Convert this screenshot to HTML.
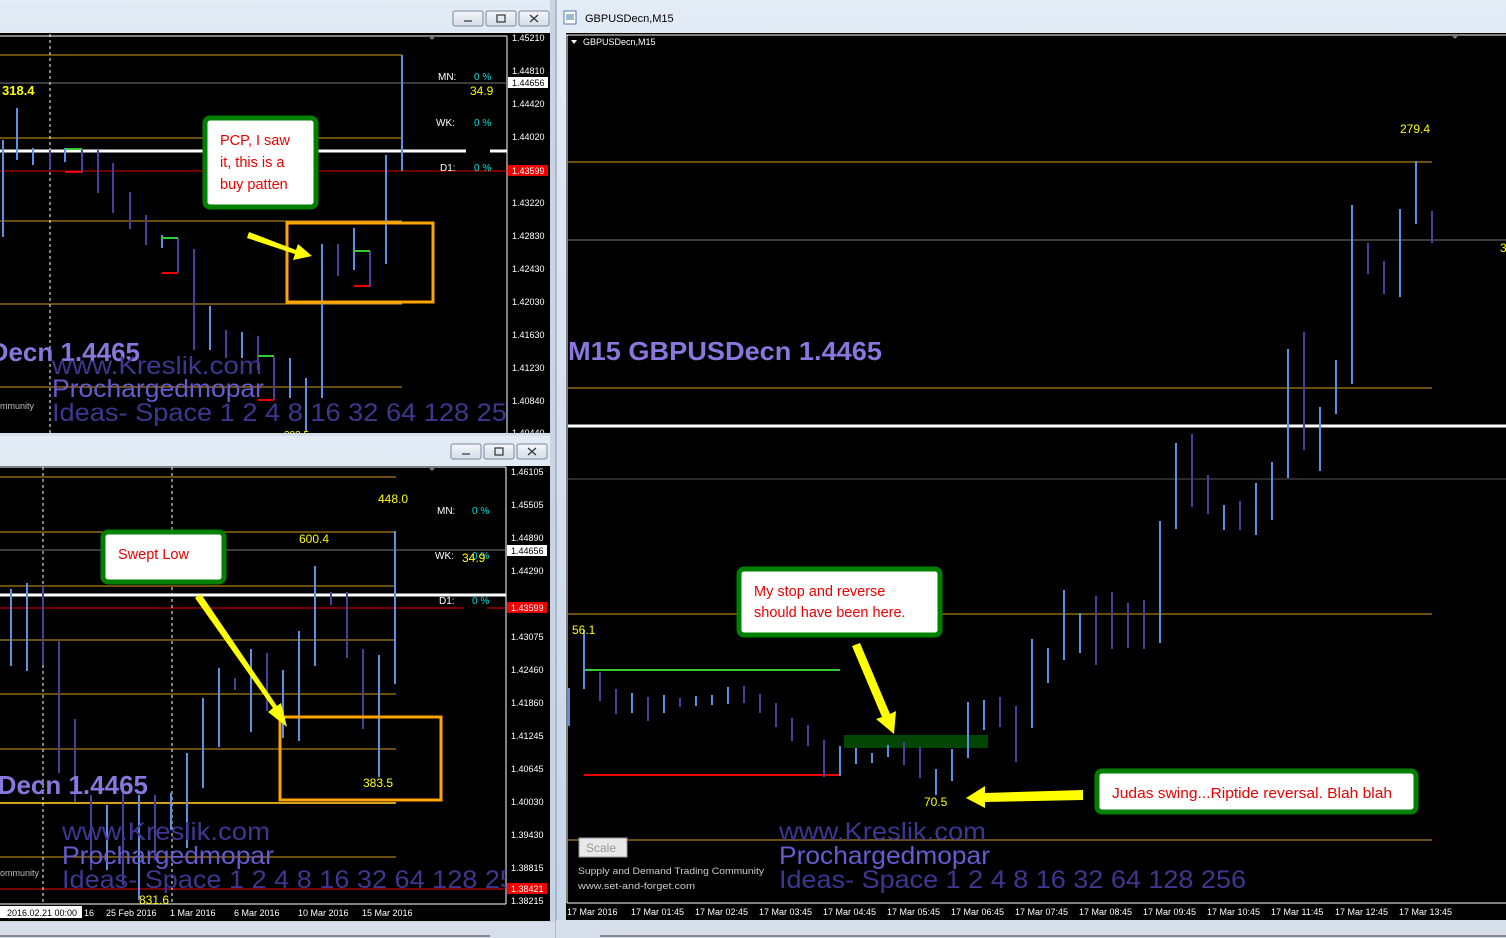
<!DOCTYPE html>
<html><head><meta charset="utf-8"><style>
html,body{margin:0;padding:0;background:#d4dbe6;width:1506px;height:938px;overflow:hidden}
svg{display:block}
text{font-family:"Liberation Sans",sans-serif}
</style></head><body>
<svg width="1506" height="938" viewBox="0 0 1506 938" xmlns="http://www.w3.org/2000/svg">
<defs>
<linearGradient id="tb" x1="0" y1="0" x2="0" y2="1"><stop offset="0" stop-color="#e3ebf5"/><stop offset="1" stop-color="#c6d5e8"/></linearGradient>
<linearGradient id="bt" x1="0" y1="0" x2="0" y2="1"><stop offset="0" stop-color="#f4f6fa"/><stop offset="1" stop-color="#d5dde8"/></linearGradient>
<clipPath id="c1"><rect x="0" y="34" width="507" height="400"/></clipPath>
<clipPath id="c2"><rect x="0" y="467" width="506" height="437"/></clipPath>
</defs>
<rect width="1506" height="938" fill="#d6dee9"/>
<!-- ============ LEFT TOP WINDOW ============ -->
<rect x="0" y="0" width="556" height="434" fill="url(#tb)"/>
<rect x="0" y="33" width="550" height="400" fill="#000"/>
<g fill="url(#bt)" stroke="#7b8797">
<rect x="453" y="11" width="30" height="15" rx="2"/><rect x="486" y="11" width="30" height="15" rx="2"/><rect x="519" y="11" width="30" height="15" rx="2"/></g>
<g stroke="#333" fill="none" stroke-width="1.2"><line x1="464" y1="21" x2="472" y2="21"/><rect x="497" y="15" width="8" height="7"/><path d="M530 15l8 7M538 15l-8 7"/></g>
<line x1="0" y1="36" x2="507" y2="36" stroke="#fff"/>
<line x1="507" y1="36" x2="507" y2="433" stroke="#fff"/>
<path d="M428 36l4 4 4-4z" fill="#777"/>
<g stroke="#d4a017" stroke-width="1"><line x1="0" y1="55" x2="402" y2="55"/><line x1="0" y1="138" x2="402" y2="138"/><line x1="0" y1="221" x2="402" y2="221"/><line x1="0" y1="304" x2="402" y2="304"/><line x1="0" y1="387" x2="402" y2="387"/></g>
<line x1="0" y1="83" x2="507" y2="83" stroke="#777"/>
<line x1="0" y1="151" x2="466" y2="151" stroke="#fff" stroke-width="3"/>
<line x1="490" y1="151" x2="507" y2="151" stroke="#fff" stroke-width="3"/>
<line x1="0" y1="171" x2="507" y2="171" stroke="#e00000"/>
<line x1="50" y1="34" x2="50" y2="433" stroke="#fff" stroke-dasharray="3,3"/>
<g stroke-width="2">
<line x1="3" y1="140" x2="3" y2="237" stroke="#5b8fe8"/><line x1="17" y1="108" x2="17" y2="160" stroke="#5b8fe8"/><line x1="33" y1="148" x2="33" y2="165" stroke="#5b8fe8"/><line x1="50" y1="150" x2="50" y2="170" stroke="#4a3fa0"/><line x1="65" y1="148" x2="65" y2="162" stroke="#5b8fe8"/><line x1="82" y1="150" x2="82" y2="173" stroke="#4a3fa0"/><line x1="98" y1="150" x2="98" y2="193" stroke="#4a3fa0"/><line x1="113" y1="163" x2="113" y2="213" stroke="#4a3fa0"/><line x1="130" y1="192" x2="130" y2="229" stroke="#4a3fa0"/><line x1="146" y1="215" x2="146" y2="245" stroke="#4a3fa0"/><line x1="162" y1="235" x2="162" y2="248" stroke="#5b8fe8"/><line x1="178" y1="238" x2="178" y2="273" stroke="#4a3fa0"/><line x1="194" y1="249" x2="194" y2="350" stroke="#4a3fa0"/><line x1="210" y1="306" x2="210" y2="350" stroke="#5b8fe8"/><line x1="226" y1="330" x2="226" y2="358" stroke="#4a3fa0"/><line x1="242" y1="332" x2="242" y2="358" stroke="#5b8fe8"/><line x1="258" y1="336" x2="258" y2="370" stroke="#4a3fa0"/><line x1="274" y1="357" x2="274" y2="400" stroke="#4a3fa0"/><line x1="290" y1="358" x2="290" y2="398" stroke="#5b8fe8"/><line x1="306" y1="378" x2="306" y2="432" stroke="#5b8fe8"/><line x1="322" y1="244" x2="322" y2="398" stroke="#5b8fe8"/><line x1="338" y1="244" x2="338" y2="276" stroke="#4a3fa0"/><line x1="354" y1="228" x2="354" y2="270" stroke="#5b8fe8"/><line x1="370" y1="251" x2="370" y2="287" stroke="#4a3fa0"/><line x1="386" y1="155" x2="386" y2="264" stroke="#5b8fe8"/><line x1="402" y1="55" x2="402" y2="171" stroke="#5b8fe8"/>
</g>
<g stroke-width="2"><line x1="65" y1="149" x2="82" y2="149" stroke="#3c3"/><line x1="65" y1="172" x2="82" y2="172" stroke="#e00"/><line x1="162" y1="238" x2="178" y2="238" stroke="#3c3"/><line x1="162" y1="273" x2="178" y2="273" stroke="#e00"/><line x1="354" y1="251" x2="370" y2="251" stroke="#3c3"/><line x1="354" y1="286" x2="370" y2="286" stroke="#e00"/><line x1="258" y1="356" x2="274" y2="356" stroke="#3c3"/><line x1="258" y1="400" x2="274" y2="400" stroke="#e00"/></g>
<g font-size="9" fill="#fff"><text x="512" y="41">1.45210</text><text x="512" y="74">1.44810</text><text x="512" y="107">1.44420</text><text x="512" y="140">1.44020</text><text x="512" y="206">1.43220</text><text x="512" y="239">1.42830</text><text x="512" y="272">1.42430</text><text x="512" y="305">1.42030</text><text x="512" y="338">1.41630</text><text x="512" y="371">1.41230</text><text x="512" y="404">1.40840</text><text x="512" y="436">1.40440</text></g>
<rect x="508" y="77" width="40" height="11" fill="#fff"/><text x="512" y="86" font-size="9" fill="#000">1.44656</text>
<rect x="508" y="165" width="40" height="11" fill="#e00"/><text x="512" y="174" font-size="9" fill="#fff">1.43599</text>
<g font-size="10"><text x="438" y="80" fill="#fff">MN:</text><text x="474" y="80" fill="#0dd">0 %</text><text x="436" y="126" fill="#fff">WK:</text><text x="474" y="126" fill="#0dd">0 %</text><text x="440" y="171" fill="#fff">D1:</text><text x="474" y="171" fill="#0dd">0 %</text></g>
<text x="470" y="95" font-size="12" fill="#ff0">34.9</text>
<text x="2" y="95" font-size="13" font-weight="bold" fill="#ff0">318.4</text>
<text x="0" y="409" font-size="9" fill="#bbb">mmunity</text>
<text x="140" y="361" text-anchor="end" font-size="26" font-weight="bold" fill="#8a76dc">GBPUSDecn 1.4465</text>
<g clip-path="url(#c1)">
<text x="52" y="374" font-size="25" fill="#3f3690" textLength="210" lengthAdjust="spacingAndGlyphs">www.Kreslik.com</text>
<text x="52" y="397" font-size="25" fill="#6a5ad0" textLength="212" lengthAdjust="spacingAndGlyphs">Prochargedmopar</text>
<text x="52" y="421" font-size="25" fill="#3f3690" textLength="470" lengthAdjust="spacingAndGlyphs">Ideas- Space 1 2 4 8 16 32 64 128 256</text>
</g>
<text x="284" y="438" font-size="10" fill="#ff0">383.5</text>
<rect x="0" y="433" width="556" height="3" fill="#d6dee9"/>
<rect x="287" y="223" width="146" height="79" fill="none" stroke="#ffa500" stroke-width="3"/>
<rect x="205" y="118" width="111" height="89" rx="5" fill="#fff" stroke="#008000" stroke-width="5"/>
<g font-size="14.5" fill="#e00"><text x="220" y="145">PCP, I saw</text><text x="220" y="167">it, this is a</text><text x="220" y="189">buy patten</text></g>
<path d="M249 232 L296 250 L298 244 L312 256 L293 260 L295 254 L247 238z" fill="#ff0"/>
<!-- ============ LEFT BOTTOM WINDOW ============ -->
<rect x="0" y="436" width="556" height="490" fill="url(#tb)"/>
<rect x="0" y="466" width="550" height="455" fill="#000"/>
<g fill="url(#bt)" stroke="#7b8797"><rect x="451" y="444" width="30" height="15" rx="2"/><rect x="484" y="444" width="30" height="15" rx="2"/><rect x="517" y="444" width="30" height="15" rx="2"/></g>
<g stroke="#333" fill="none" stroke-width="1.2"><line x1="462" y1="454" x2="470" y2="454"/><rect x="495" y="448" width="8" height="7"/><path d="M528 448l8 7M536 448l-8 7"/></g>
<line x1="0" y1="467" x2="506" y2="467" stroke="#fff"/>
<line x1="506" y1="467" x2="506" y2="904" stroke="#fff"/>
<line x1="0" y1="904" x2="506" y2="904" stroke="#fff"/>
<path d="M428 467l4 4 4-4z" fill="#777"/>
<g stroke="#d4a017"><line x1="0" y1="477" x2="396" y2="477"/><line x1="0" y1="532" x2="396" y2="532"/><line x1="0" y1="586" x2="396" y2="586"/><line x1="0" y1="640" x2="396" y2="640"/><line x1="0" y1="694" x2="396" y2="694"/><line x1="0" y1="749" x2="396" y2="749"/><line x1="0" y1="803" x2="396" y2="803" stroke-width="2"/><line x1="0" y1="857" x2="396" y2="857"/></g>
<line x1="0" y1="550" x2="506" y2="550" stroke="#777"/>
<line x1="0" y1="595" x2="506" y2="595" stroke="#fff" stroke-width="3"/>
<line x1="0" y1="608" x2="463" y2="608" stroke="#e00"/><line x1="487" y1="608" x2="506" y2="608" stroke="#e00"/>
<line x1="0" y1="889" x2="506" y2="889" stroke="#e00"/>
<line x1="43" y1="467" x2="43" y2="904" stroke="#fff" stroke-dasharray="3,3"/>
<line x1="172" y1="467" x2="172" y2="904" stroke="#fff" stroke-dasharray="3,3"/>
<g stroke-width="2">
<line x1="11" y1="589" x2="11" y2="666" stroke="#5b8fe8"/><line x1="27" y1="583" x2="27" y2="671" stroke="#5b8fe8"/><line x1="43" y1="585" x2="43" y2="665" stroke="#4a3fa0"/><line x1="59" y1="641" x2="59" y2="773" stroke="#4a3fa0"/><line x1="75" y1="719" x2="75" y2="802" stroke="#4a3fa0"/><line x1="91" y1="795" x2="91" y2="870" stroke="#4a3fa0"/><line x1="107" y1="805" x2="107" y2="870" stroke="#5b8fe8"/><line x1="123" y1="790" x2="123" y2="885" stroke="#4a3fa0"/><line x1="139" y1="795" x2="139" y2="900" stroke="#5b8fe8"/><line x1="155" y1="795" x2="155" y2="860" stroke="#4a3fa0"/><line x1="171" y1="793" x2="171" y2="830" stroke="#5b8fe8"/><line x1="187" y1="753" x2="187" y2="848" stroke="#5b8fe8"/><line x1="203" y1="698" x2="203" y2="788" stroke="#5b8fe8"/><line x1="219" y1="668" x2="219" y2="747" stroke="#5b8fe8"/><line x1="235" y1="678" x2="235" y2="690" stroke="#4a3fa0"/><line x1="251" y1="649" x2="251" y2="732" stroke="#5b8fe8"/><line x1="267" y1="653" x2="267" y2="711" stroke="#4a3fa0"/><line x1="283" y1="670" x2="283" y2="738" stroke="#5b8fe8"/><line x1="299" y1="631" x2="299" y2="741" stroke="#5b8fe8"/><line x1="315" y1="566" x2="315" y2="666" stroke="#5b8fe8"/><line x1="331" y1="592" x2="331" y2="605" stroke="#4a3fa0"/><line x1="347" y1="592" x2="347" y2="658" stroke="#4a3fa0"/><line x1="363" y1="649" x2="363" y2="729" stroke="#4a3fa0"/><line x1="379" y1="655" x2="379" y2="777" stroke="#5b8fe8"/><line x1="395" y1="531" x2="395" y2="684" stroke="#5b8fe8"/>
</g>
<g font-size="9" fill="#fff"><text x="511" y="475">1.46105</text><text x="511" y="508">1.45505</text><text x="511" y="541">1.44890</text><text x="511" y="574">1.44290</text><text x="511" y="640">1.43075</text><text x="511" y="673">1.42460</text><text x="511" y="706">1.41860</text><text x="511" y="739">1.41245</text><text x="511" y="772">1.40645</text><text x="511" y="805">1.40030</text><text x="511" y="838">1.39430</text><text x="511" y="871">1.38815</text><text x="511" y="904">1.38215</text></g>
<rect x="507" y="545" width="40" height="11" fill="#fff"/><text x="511" y="554" font-size="9" fill="#000">1.44656</text>
<rect x="507" y="602" width="40" height="11" fill="#e00"/><text x="511" y="611" font-size="9" fill="#fff">1.43599</text>
<rect x="507" y="883" width="40" height="11" fill="#e00"/><text x="511" y="892" font-size="9" fill="#fff">1.38421</text>
<g font-size="10"><text x="437" y="514" fill="#fff">MN:</text><text x="472" y="514" fill="#0dd">0 %</text><text x="435" y="559" fill="#fff">WK:</text><text x="472" y="559" fill="#0dd">0 %</text><text x="439" y="604" fill="#fff">D1:</text><text x="472" y="604" fill="#0dd">0 %</text></g>
<g font-size="12" fill="#ff0"><text x="462" y="562">34.9</text><text x="378" y="503">448.0</text><text x="299" y="543">600.4</text><text x="363" y="787">383.5</text><text x="139" y="904">831.6</text></g>
<text x="148" y="794" text-anchor="end" font-size="26" font-weight="bold" fill="#8a76dc">GBPUSDecn 1.4465</text>
<text x="0" y="876" font-size="9" fill="#bbb">ommunity</text>
<g clip-path="url(#c2)">
<text x="62" y="840" font-size="25" fill="#3f3690" textLength="208" lengthAdjust="spacingAndGlyphs">www.Kreslik.com</text>
<text x="62" y="864" font-size="25" fill="#6a5ad0" textLength="212" lengthAdjust="spacingAndGlyphs">Prochargedmopar</text>
<text x="62" y="888" font-size="25" fill="#3f3690" textLength="468" lengthAdjust="spacingAndGlyphs">Ideas- Space 1 2 4 8 16 32 64 128 256</text>
</g>
<rect x="0" y="905" width="550" height="16" fill="#000"/>
<rect x="0" y="906" width="82" height="12" fill="#fff"/>
<g font-size="9" fill="#fff"><text x="7" y="916" fill="#000">2016.02.21 00:00</text><text x="84" y="916">16</text><text x="106" y="916">25 Feb 2016</text><text x="170" y="916">1 Mar 2016</text><text x="234" y="916">6 Mar 2016</text><text x="298" y="916">10 Mar 2016</text><text x="362" y="916">15 Mar 2016</text></g>
<rect x="280" y="717" width="161" height="83" fill="none" stroke="#ffa500" stroke-width="3"/>
<rect x="103" y="532" width="121" height="50" rx="5" fill="#fff" stroke="#008000" stroke-width="5"/>
<text x="118" y="559" font-size="14.5" fill="#e00">Swept Low</text>
<path d="M195 598 L273 708 L268 712 L287 727 L281 703 L277 706 L201 594z" fill="#ff0"/>
<rect x="550" y="0" width="6" height="938" fill="#c9d5e5"/>
<rect x="0" y="922" width="556" height="16" fill="#d6dee9"/>
<line x1="0" y1="936" x2="490" y2="936" stroke="#333"/>
<!-- ============ RIGHT WINDOW ============ -->
<rect x="556" y="0" width="950" height="938" fill="url(#tb)"/>
<line x1="556" y1="0" x2="556" y2="938" stroke="#8a97a8"/>
<rect x="566" y="33" width="940" height="887" fill="#000"/>
<rect x="564" y="11" width="12" height="13" fill="#fff" stroke="#5577aa"/><rect x="566" y="14" width="8" height="6" fill="#9bc"/>
<text x="585" y="22" font-size="11" fill="#000">GBPUSDecn,M15</text>
<line x1="566" y1="35" x2="1506" y2="35" stroke="#fff"/>
<line x1="567" y1="35" x2="567" y2="903" stroke="#fff"/>
<path d="M1451 35l4 4 4-4z" fill="#777"/>
<path d="M571 40l3 4 3-4z" fill="#fff"/>
<text x="583" y="45" font-size="9" fill="#fff">GBPUSDecn,M15</text>
<g stroke="#d4a017"><line x1="568" y1="162" x2="1432" y2="162"/><line x1="568" y1="388" x2="1432" y2="388"/><line x1="568" y1="614" x2="1432" y2="614"/><line x1="568" y1="840" x2="1432" y2="840"/></g>
<line x1="568" y1="240" x2="1506" y2="240" stroke="#777"/>
<line x1="568" y1="426" x2="1506" y2="426" stroke="#fff" stroke-width="3"/>
<line x1="568" y1="479" x2="1506" y2="479" stroke="#555"/>
<line x1="584" y1="670" x2="840" y2="670" stroke="#33cc33" stroke-width="2"/>
<line x1="584" y1="775" x2="840" y2="775" stroke="#e00" stroke-width="2"/>
<rect x="844" y="735" width="144" height="13" fill="#034503"/>
<g stroke-width="2">
<line x1="569" y1="688" x2="569" y2="726" stroke="#5b8fe8"/><line x1="584" y1="630" x2="584" y2="689" stroke="#5b8fe8"/><line x1="600" y1="672" x2="600" y2="701" stroke="#4a3fa0"/><line x1="616" y1="689" x2="616" y2="714" stroke="#4a3fa0"/><line x1="632" y1="693" x2="632" y2="713" stroke="#5b8fe8"/><line x1="648" y1="697" x2="648" y2="721" stroke="#4a3fa0"/><line x1="664" y1="695" x2="664" y2="713" stroke="#5b8fe8"/><line x1="680" y1="698" x2="680" y2="707" stroke="#4a3fa0"/><line x1="696" y1="696" x2="696" y2="706" stroke="#5b8fe8"/><line x1="712" y1="695" x2="712" y2="705" stroke="#5b8fe8"/><line x1="728" y1="687" x2="728" y2="704" stroke="#5b8fe8"/><line x1="744" y1="686" x2="744" y2="703" stroke="#4a3fa0"/><line x1="760" y1="694" x2="760" y2="713" stroke="#4a3fa0"/><line x1="776" y1="703" x2="776" y2="727" stroke="#4a3fa0"/><line x1="792" y1="718" x2="792" y2="741" stroke="#4a3fa0"/><line x1="808" y1="725" x2="808" y2="746" stroke="#4a3fa0"/><line x1="824" y1="740" x2="824" y2="777" stroke="#4a3fa0"/><line x1="840" y1="746" x2="840" y2="776" stroke="#5b8fe8"/><line x1="856" y1="748" x2="856" y2="764" stroke="#5b8fe8"/><line x1="872" y1="753" x2="872" y2="763" stroke="#5b8fe8"/><line x1="888" y1="745" x2="888" y2="757" stroke="#5b8fe8"/><line x1="904" y1="742" x2="904" y2="765" stroke="#4a3fa0"/><line x1="920" y1="747" x2="920" y2="778" stroke="#4a3fa0"/><line x1="936" y1="769" x2="936" y2="795" stroke="#5b8fe8"/><line x1="952" y1="749" x2="952" y2="781" stroke="#5b8fe8"/><line x1="968" y1="702" x2="968" y2="758" stroke="#5b8fe8"/><line x1="984" y1="700" x2="984" y2="730" stroke="#5b8fe8"/><line x1="1000" y1="697" x2="1000" y2="727" stroke="#4a3fa0"/><line x1="1016" y1="706" x2="1016" y2="762" stroke="#4a3fa0"/><line x1="1032" y1="639" x2="1032" y2="728" stroke="#5b8fe8"/><line x1="1048" y1="648" x2="1048" y2="683" stroke="#5b8fe8"/><line x1="1064" y1="590" x2="1064" y2="660" stroke="#5b8fe8"/><line x1="1080" y1="613" x2="1080" y2="653" stroke="#5b8fe8"/><line x1="1096" y1="596" x2="1096" y2="665" stroke="#4a3fa0"/><line x1="1112" y1="592" x2="1112" y2="649" stroke="#4a3fa0"/><line x1="1128" y1="603" x2="1128" y2="648" stroke="#4a3fa0"/><line x1="1144" y1="600" x2="1144" y2="649" stroke="#4a3fa0"/><line x1="1160" y1="521" x2="1160" y2="643" stroke="#5b8fe8"/><line x1="1176" y1="443" x2="1176" y2="529" stroke="#5b8fe8"/><line x1="1192" y1="434" x2="1192" y2="507" stroke="#4a3fa0"/><line x1="1208" y1="475" x2="1208" y2="514" stroke="#4a3fa0"/><line x1="1224" y1="505" x2="1224" y2="530" stroke="#5b8fe8"/><line x1="1240" y1="501" x2="1240" y2="530" stroke="#4a3fa0"/><line x1="1256" y1="483" x2="1256" y2="535" stroke="#5b8fe8"/><line x1="1272" y1="462" x2="1272" y2="520" stroke="#5b8fe8"/><line x1="1288" y1="349" x2="1288" y2="478" stroke="#5b8fe8"/><line x1="1304" y1="332" x2="1304" y2="450" stroke="#4a3fa0"/><line x1="1320" y1="407" x2="1320" y2="471" stroke="#5b8fe8"/><line x1="1336" y1="360" x2="1336" y2="414" stroke="#5b8fe8"/><line x1="1352" y1="205" x2="1352" y2="384" stroke="#5b8fe8"/><line x1="1368" y1="243" x2="1368" y2="274" stroke="#4a3fa0"/><line x1="1384" y1="261" x2="1384" y2="294" stroke="#4a3fa0"/><line x1="1400" y1="209" x2="1400" y2="297" stroke="#5b8fe8"/><line x1="1416" y1="161" x2="1416" y2="224" stroke="#5b8fe8"/><line x1="1432" y1="211" x2="1432" y2="243" stroke="#4a3fa0"/>
</g>
<g font-size="12" fill="#ff0"><text x="1400" y="133">279.4</text><text x="1500" y="252">3</text><text x="572" y="634">56.1</text><text x="924" y="806">70.5</text></g>
<text x="568" y="360" font-size="26" font-weight="bold" fill="#8a76dc" textLength="314" lengthAdjust="spacingAndGlyphs">M15 GBPUSDecn 1.4465</text>
<rect x="739" y="569" width="201" height="66" rx="5" fill="#fff" stroke="#008000" stroke-width="5"/>
<g font-size="14.5" fill="#e00"><text x="754" y="596">My stop and reverse</text><text x="754" y="617">should have been here.</text></g>
<path d="M852 646 L882 717 L876 719 L894 734 L896 711 L890 714 L860 643z" fill="#ff0"/>
<rect x="1097" y="771" width="319" height="41" rx="5" fill="#fff" stroke="#008000" stroke-width="5"/>
<text x="1112" y="798" font-size="14.5" fill="#e00" textLength="280" lengthAdjust="spacingAndGlyphs">Judas swing...Riptide reversal.  Blah blah</text>
<path d="M1083 790 L985 793 L985 786 L966 798 L985 808 L985 802 L1083 800z" fill="#ff0"/>
<rect x="579" y="838" width="48" height="19" fill="#e8e8e8" stroke="#999"/>
<text x="586" y="852" font-size="12" fill="#999">Scale</text>
<text x="578" y="874" font-size="9" fill="#ccc" textLength="186" lengthAdjust="spacingAndGlyphs">Supply and Demand Trading Community</text>
<text x="578" y="889" font-size="9" fill="#ccc" textLength="117" lengthAdjust="spacingAndGlyphs">www.set-and-forget.com</text>
<text x="779" y="840" font-size="25" fill="#3f3690" textLength="207" lengthAdjust="spacingAndGlyphs">www.Kreslik.com</text>
<text x="779" y="864" font-size="25" fill="#6a5ad0" textLength="211" lengthAdjust="spacingAndGlyphs">Prochargedmopar</text>
<text x="779" y="888" font-size="25" fill="#3f3690" textLength="467" lengthAdjust="spacingAndGlyphs">Ideas- Space 1 2 4 8 16 32 64 128 256</text>
<line x1="567" y1="903" x2="1506" y2="903" stroke="#fff"/>
<g font-size="9" fill="#fff"><text x="567" y="915">17 Mar 2016</text><text x="631" y="915">17 Mar 01:45</text><text x="695" y="915">17 Mar 02:45</text><text x="759" y="915">17 Mar 03:45</text><text x="823" y="915">17 Mar 04:45</text><text x="887" y="915">17 Mar 05:45</text><text x="951" y="915">17 Mar 06:45</text><text x="1015" y="915">17 Mar 07:45</text><text x="1079" y="915">17 Mar 08:45</text><text x="1143" y="915">17 Mar 09:45</text><text x="1207" y="915">17 Mar 10:45</text><text x="1271" y="915">17 Mar 11:45</text><text x="1335" y="915">17 Mar 12:45</text><text x="1399" y="915">17 Mar 13:45</text></g>
<rect x="556" y="920" width="950" height="18" fill="#d6dee9"/>
<line x1="600" y1="936" x2="1506" y2="936" stroke="#333"/>
</svg>
</body></html>
